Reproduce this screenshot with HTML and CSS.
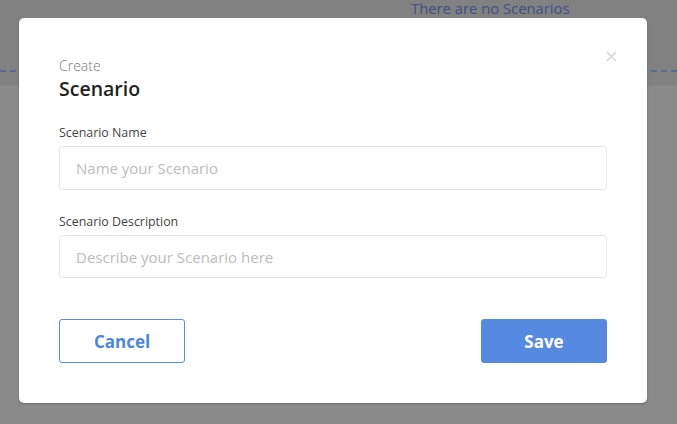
FILE: index.html
```html
<!DOCTYPE html>
<html>
<head>
<meta charset="utf-8">
<link rel="stylesheet" href="styles.css">
</head>
<body>
<div class="page">
  <div class="page-top">
    <div class="empty-note">There are no Scenarios</div>
    <div class="dash-line"></div>
  </div>
  <div class="page-rest"></div>
</div>
<div class="overlay">
  <div class="modal">
    <button class="close" aria-label="Close">
      <svg width="11" height="11" viewBox="0 0 11 11"><path d="M1 1L10 10M10 1L1 10" stroke="#cfcfcf" stroke-width="1.2" fill="none"/></svg>
    </button>
    <div class="title">
      <div class="title-sub">Create</div>
      <div class="title-main">Scenario</div>
    </div>
    <div class="field">
      <label class="label">Scenario Name</label>
      <div class="input">Name your Scenario</div>
    </div>
    <div class="field">
      <label class="label">Scenario Description</label>
      <div class="input input-short">Describe your Scenario here</div>
    </div>
    <div class="actions">
      <button class="btn btn-outline">Cancel</button>
      <button class="btn btn-primary">Save</button>
    </div>
  </div>
</div>
</body>
</html>
```
FILE: styles.css
```css
* { box-sizing: border-box; }
html, body { margin: 0; padding: 0; }
body {
  width: 677px;
  height: 424px;
  overflow: hidden;
  font-family: "Open Sans", Lato, sans-serif;
  background: #8a8a8a;
  position: relative;
}
.page { display: flex; flex-direction: column; height: 424px; }
.page-top {
  height: 86px;
  background: #818181;
  display: flex;
  flex-direction: column;
  border-bottom: 1px solid #848484;
}
.empty-note {
  margin: 0 0 0 411px;
  font-size: 14.8px;
  line-height: 17px;
  color: #3e5283;
}
.dash-line {
  margin-top: 53px;
  border-top: 2px dashed #5a6b93;
  height: 0;
}
.page-rest { flex: 1; background: #8a8a8a; }

.overlay {
  position: absolute;
  inset: 0;
  padding: 18px 30px 21px 19px;
}
.modal {
  position: relative;
  width: 628px;
  height: 385px;
  background: #fff;
  border-radius: 5px;
  box-shadow: 0 1px 2px rgba(0,0,0,0.25);
  padding: 38px 40px 40px 40px;
  display: flex;
  flex-direction: column;
}
.close {
  position: absolute;
  top: 33px;
  right: 30px;
  background: none;
  border: 0;
  padding: 0;
  width: 11px;
  height: 11px;
  display: flex;
}
.title-sub {
  font-size: 14px;
  line-height: 19px;
  font-weight: 300;
  color: #777;
}
.title-main {
  font-size: 19.5px;
  line-height: 25px;
  font-weight: 600;
  color: #222;
  margin-top: 1px;
}
.field { display: flex; flex-direction: column; }
.title + .field { margin-top: 24px; }
.field + .field { margin-top: 24px; }
.label {
  font-size: 12.4px;
  line-height: 16px;
  color: #444;
  margin-bottom: 5px;
}
.input {
  height: 44px;
  border: 1px solid #e6e6e6;
  border-radius: 4px;
  padding: 0 16px;
  display: flex;
  align-items: center;
  font-size: 15px;
  color: #bcbcbc;
}
.input-short { height: 43px; }
.actions {
  margin-top: auto;
  display: flex;
  justify-content: space-between;
}
.btn {
  width: 126px;
  height: 44px;
  border-radius: 3px;
  font-family: "Open Sans", Lato, sans-serif;
  font-size: 17px;
  font-weight: 700;
  cursor: pointer;
}
.btn-outline {
  background: #fff;
  border: 1px solid #5b8de0;
  color: #4f86dd;
}
.btn-primary {
  background: #568ae0;
  border: 1px solid #568ae0;
  color: #fff;
}
```
